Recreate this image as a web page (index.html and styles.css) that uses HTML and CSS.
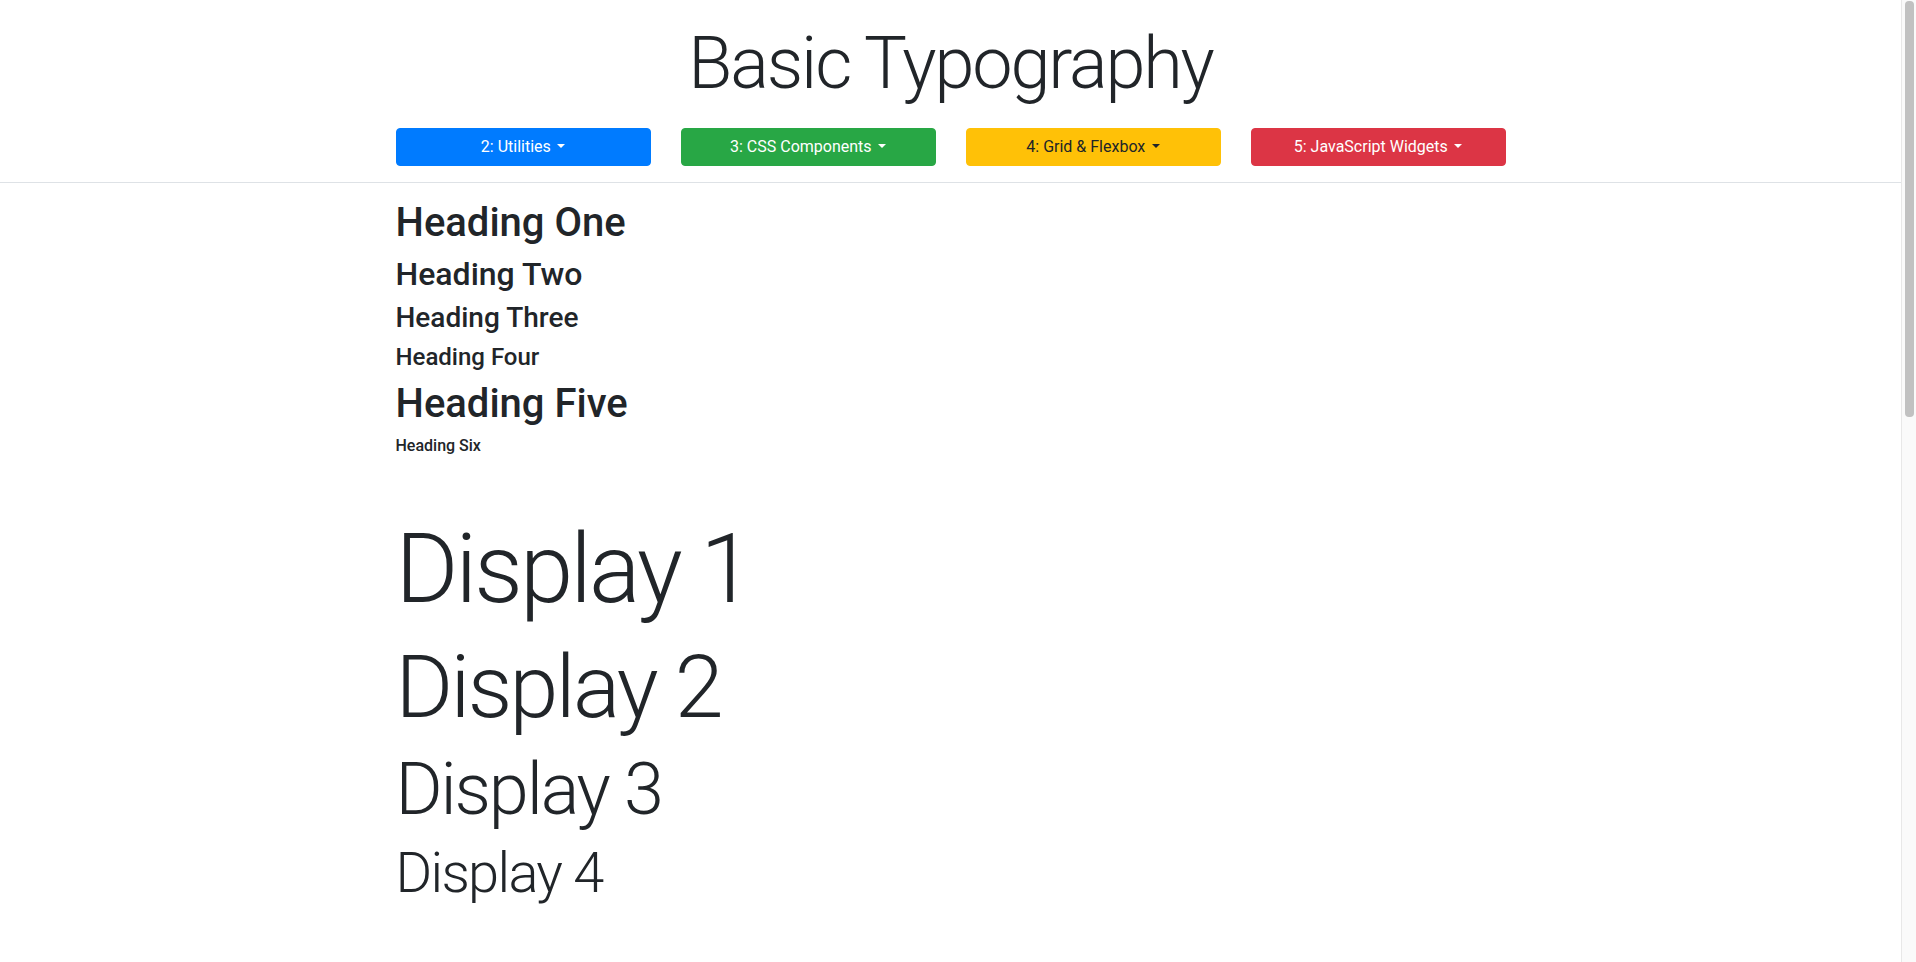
FILE: index.html
```html
<!DOCTYPE html>
<html lang="en">
<head>
<meta charset="utf-8">
<title>Basic Typography</title>
<link rel="stylesheet" href="styles.css">
</head>
<body>
<div class="page">
  <header class="site-header">
    <h1 class="page-title">Basic Typography</h1>
    <nav class="container nav-grid">
      <button class="btn btn-primary">2: Utilities<span class="caret"></span></button>
      <button class="btn btn-success">3: CSS Components<span class="caret"></span></button>
      <button class="btn btn-warning">4: Grid &amp; Flexbox<span class="caret"></span></button>
      <button class="btn btn-danger">5: JavaScript Widgets<span class="caret"></span></button>
    </nav>
  </header>
  <main class="container content">
    <section class="headings">
      <h1 class="h-one">Heading One</h1>
      <h2 class="h-two">Heading Two</h2>
      <h3 class="h-three">Heading Three</h3>
      <h4 class="h-four">Heading Four</h4>
      <h5 class="h-one">Heading Five</h5>
      <h6 class="h-six">Heading Six</h6>
    </section>
    <section class="displays">
      <h1 class="display display-1">Display 1</h1>
      <h1 class="display display-2">Display 2</h1>
      <h1 class="display display-3">Display 3</h1>
      <h1 class="display display-4">Display 4</h1>
    </section>
  </main>
</div>
<div class="scrollbar" aria-hidden="true"><div class="scrollbar-thumb"></div></div>
</body>
</html>
```
FILE: styles.css
```css
html, body {
  margin: 0;
  padding: 0;
}
body {
  font-family: Roboto, "Liberation Sans", sans-serif;
  color: #212529;
  background: #fff;
  font-size: 16px;
  line-height: 1.5;
}
.page {
  margin-right: 15px;
}
.scrollbar {
  position: fixed;
  top: 0;
  right: 0;
  bottom: 0;
  width: 14px;
  background: #fafafa;
  border-left: 1px solid #e8e8e8;
}
.scrollbar-thumb {
  margin: 1px 2px 0 3px;
  height: 416px;
  background: #c1c1c1;
  border-radius: 4px;
}
.container {
  box-sizing: border-box;
  max-width: 1140px;
  margin: 0 auto;
  padding: 0 15px;
}
.site-header {
  padding: 21px 0 16px;
  border-bottom: 1px solid #dee2e6;
}
.page-title {
  margin: 0 0 20.6px;
  text-align: center;
  font-size: 72px;
  font-weight: 300;
  line-height: 1.2;
  letter-spacing: -0.03em;
}
.nav-grid {
  display: grid;
  grid-template-columns: repeat(4, 1fr);
  column-gap: 30px;
}
.btn {
  font-family: inherit;
  font-size: 16px;
  line-height: 1.5;
  font-weight: 400;
  padding: 6px 12px;
  border: 1px solid transparent;
  border-radius: 4px;
  color: #fff;
  text-align: center;
  cursor: pointer;
}
.btn-primary { background: #007bff; border-color: #007bff; }
.btn-success { background: #28a745; border-color: #28a745; }
.btn-warning { background: #ffc107; border-color: #ffc107; color: #212529; }
.btn-danger { background: #dc3545; border-color: #dc3545; }
.caret {
  display: inline-block;
  margin-left: 0.4em;
  vertical-align: 0.255em;
  border-top: 0.3em solid;
  border-right: 0.3em solid transparent;
  border-left: 0.3em solid transparent;
  border-bottom: 0;
}
.content {
  padding-top: 16px;
}
.headings h1, .headings h2, .headings h3,
.headings h4, .headings h5, .headings h6 {
  margin: 0 0 8px;
  font-weight: 500;
  line-height: 1.2;
}
.h-one { font-size: 40px; }
.h-two { font-size: 32px; }
.h-three { font-size: 28px; }
.h-four { font-size: 24px; }
.h-six { font-size: 16px; }
.displays {
  margin-top: 57px;
}
.display {
  margin: 0 0 7px;
  font-weight: 300;
  line-height: 1.2;
  letter-spacing: -0.03em;
}
.display-1 { font-size: 96px; }
.display-2 { font-size: 88px; }
.display-3 { font-size: 72px; }
.display-4 { font-size: 56px; }
```
